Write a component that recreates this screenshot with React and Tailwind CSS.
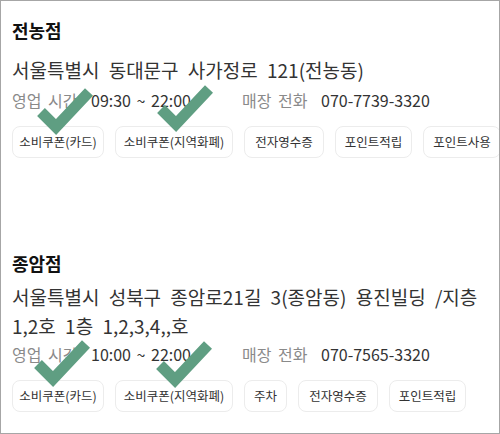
const stores = [
  {
    name: '전농점',
    address: ['서울특별시 동대문구 사가정로 121(전농동)'],
    hours: '09:30 ~ 22:00',
    phone: '070-7739-3320',
    tags: [
      ['소비쿠폰(카드)', 92],
      ['소비쿠폰(지역화폐)', 118],
      ['전자영수증', 80],
      ['포인트적립', 77],
      ['포인트사용', 78],
    ],
  },
  {
    name: '종암점',
    address: ['서울특별시 성북구 종암로21길 3(종암동) 용진빌딩 /지층', '1,2호 1층 1,2,3,4,,호'],
    hours: '10:00 ~ 22:00',
    phone: '070-7565-3320',
    tags: [
      ['소비쿠폰(카드)', 92],
      ['소비쿠폰(지역화폐)', 118],
      ['주차', 43],
      ['전자영수증', 80],
      ['포인트적립', 77],
    ],
  },
];

// big green check drawn over the card
const Check = ({ className = '' }) => (
  <svg
    className={`absolute pointer-events-none ${className}`}
    width="62"
    height="54"
    viewBox="0 0 62 54"
  >
    <polyline
      points="7,27 22,42 55,7"
      fill="none"
      stroke="#5f9e82"
      strokeWidth="11"
      strokeLinejoin="miter"
      strokeLinecap="butt"
    />
  </svg>
);

const Tag = ({ label, width }) => (
  <div
    className="shrink-0 h-8 flex items-center justify-center rounded-lg border border-[#ececec] text-[12.5px] text-[#333] whitespace-nowrap bg-white"
    style={{ width }}
  >
    {label}
  </div>
);

const StoreInfo = ({ store, titleGap, hoursGap }) => (
  <div>
    <h2 className="text-[18px] leading-6 font-bold text-[#111]">{store.name}</h2>
    <div className={`${titleGap} text-[19px] leading-[29px] text-[#333] [word-spacing:5px]`}>
      {store.address.map((line) => (
        <div key={line}>{line}</div>
      ))}
    </div>
    <div className={`${hoursGap} flex items-center text-[16px] leading-6 whitespace-nowrap`}>
      <span className="w-[79px] text-[#8a8a8a] [word-spacing:3px]">영업 시간</span>
      <span className="w-[151px] text-[#333] [word-spacing:2px]">{store.hours}</span>
      <span className="w-[79px] text-[#8a8a8a] [word-spacing:3px]">매장 전화</span>
      <span className="text-[#333]">{store.phone}</span>
    </div>
    <div className="mt-[14px] flex gap-[11px]">
      {store.tags.map(([t, w]) => (
        <Tag key={t} label={t} width={w} />
      ))}
    </div>
  </div>
);

export default function App() {
  return (
    <div
      className="w-[500px] h-[434px] bg-white border border-[#a6a6a6] overflow-hidden pl-[11px]"
      style={{ fontFamily: '"Noto Sans CJK KR", "Noto Sans", sans-serif' }}
    >
      <div className="relative pt-[17px]">
        <StoreInfo store={stores[0]} titleGap="mt-[13px]" hoursGap="mt-[4px]" />
        <Check className="left-[22px] top-[84px]" />
        <Check className="left-[142px] top-[81px]" />
      </div>
      <div className="relative mt-[93px]">
        <StoreInfo store={stores[1]} titleGap="mt-[7px]" hoursGap="mt-[2px]" />
        <Check className="left-[19px] top-[86px]" />
        <Check className="left-[141px] top-[87px]" />
      </div>
    </div>
  );
}
